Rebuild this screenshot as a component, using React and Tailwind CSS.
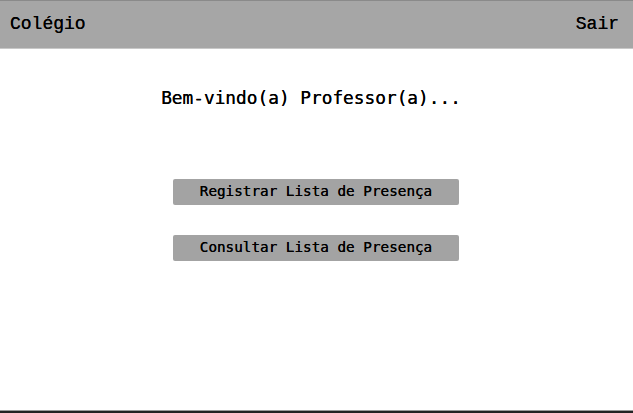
export default function App() {
  return (
    <div className="w-[633px] h-[413px] bg-white flex flex-col overflow-hidden">
      <header className="h-[49px] shrink-0 bg-[#a6a6a6] border-t border-[#8a8a8a] border-b border-b-[#c8c8c8] flex items-center justify-between pl-[10px] pr-[14px] text-[18px] text-black" style={{ fontFamily: '"Liberation Mono", monospace' }}>
        <span className="[text-shadow:0_0_0.4px_#000]">Colégio</span>
        <span className="[text-shadow:0_0_0.4px_#000]">Sair</span>
      </header>
      <main className="flex-1 flex flex-col items-center" style={{ fontFamily: '"DejaVu Sans Mono", monospace' }}>
        <h1 className="mt-[37px] text-[17.8px] leading-[24px] text-black pr-[11px] [text-shadow:0_0_0.5px_#000]">Bem-vindo(a) Professor(a)...</h1>
        <div className="mt-[69px] flex flex-col gap-[30px] pr-[1px]">
          <button className="w-[286px] h-[26px] bg-[#a3a3a3] rounded-[2px] text-[14.3px] text-black flex items-center justify-center [text-shadow:0_0_0.3px_#000]">Registrar Lista de Presença</button>
          <button className="w-[286px] h-[26px] bg-[#a3a3a3] rounded-[2px] text-[14.3px] text-black flex items-center justify-center [text-shadow:0_0_0.3px_#000]">Consultar Lista de Presença</button>
        </div>
      </main>
      <div className="h-[1px] bg-[#9a9a9a] shrink-0" />
      <div className="h-[2px] bg-[#222222] shrink-0" />
    </div>
  );
}
